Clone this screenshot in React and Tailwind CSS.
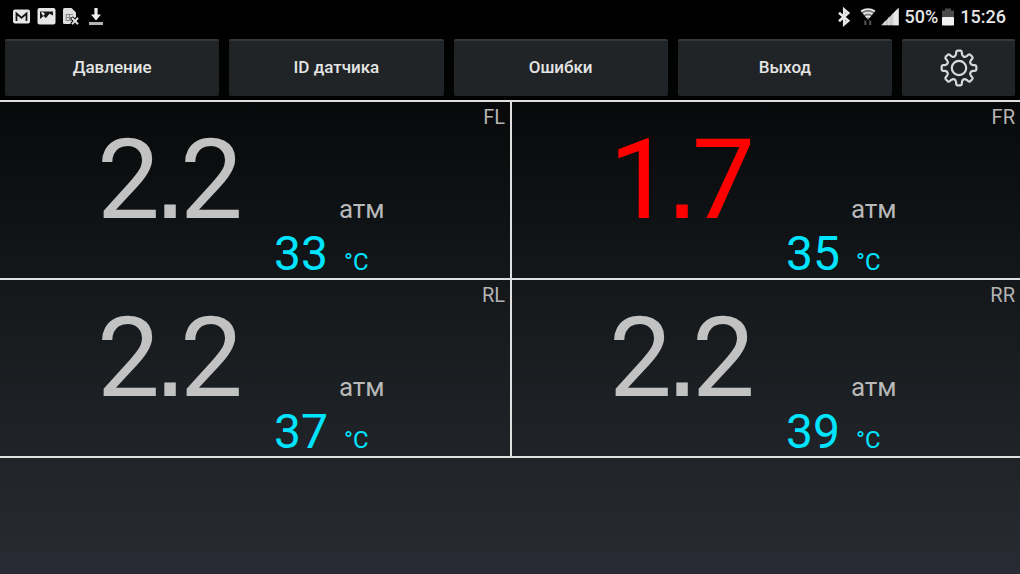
import React from "react";

const tabs = ["Давление", "ID датчика", "Ошибки", "Выход"];

const wheels = [
  { id: "FL", pressure: "2.2", temp: 33 },
  { id: "FR", pressure: "1.7", temp: 35, alert: true },
  { id: "RL", pressure: "2.2", temp: 37 },
  { id: "RR", pressure: "2.2", temp: 39 },
];

function gearPath() {
  const p = (deg, r) => {
    const t = (deg * Math.PI) / 180;
    return `${(Math.sin(t) * r).toFixed(2)} ${(-Math.cos(t) * r).toFixed(2)}`;
  };
  let d = "";
  for (let a = 0; a < 360; a += 45) {
    d += `${a ? "L" : "M"}${p(a - 12, 14.2)} L${p(a - 10, 16.2)} Q${p(a - 9, 17.4)} ${p(a - 5, 17.4)} `;
    d += `L${p(a + 5, 17.4)} Q${p(a + 9, 17.4)} ${p(a + 10, 16.2)} L${p(a + 12, 14.2)} `;
    d += `C${p(a + 17, 11.8)} ${p(a + 28, 11.8)} ${p(a + 33, 14.2)} `;
  }
  return d + "Z";
}

function GearIcon() {
  return (
    <svg viewBox="-20 -20 40 40" className="size-10" fill="none" stroke="#d8d8d8" strokeWidth="2.2" strokeLinejoin="round" aria-hidden="true">
      <path d={gearPath()} />
      <circle r="7.2" />
    </svg>
  );
}

function StatusBar() {
  return (
    <header className="flex h-[34px] items-center justify-between bg-black pr-3.5 pl-3 text-[#e6e6e6]">
      <div className="flex items-center gap-1.5">
        <svg viewBox="0 0 19 18" className="h-[18px] w-[19px]" aria-hidden="true">
          <rect x="1" y="1.5" width="17" height="14" rx="2" fill="#e6e6e6" />
          <path d="M4.5 13V5.5L9.5 9.8L14.5 5.5V13" fill="none" stroke="#151515" strokeWidth="1.8" />
        </svg>
        <svg viewBox="0 0 19 18" className="h-[18px] w-[19px]" aria-hidden="true">
          <rect x="0.5" y="0" width="18" height="16.5" rx="2" fill="#e6e6e6" />
          <path d="M3 3.5H16V7.5L12.5 5.8L9 10L6.5 8L3 11Z" fill="#151515" />
          <path d="M4 4.5L6 4L8 6L6 8Z" fill="#e6e6e6" />
        </svg>
        <svg viewBox="0 0 18 18" className="h-[18px] w-[18px]" aria-hidden="true">
          <path d="M2.5 0H9.5L14 4.5V10L9 16H2.5Q1 16 1 14.5V1.5Q1 0 2.5 0Z" fill="#dedede" />
          <path d="M4 6.5H11M4 9.5H10M4 12.5H9M4.2 6V13M7.5 6V13" fill="none" stroke="#888" strokeWidth="1.1" />
          <path d="M9.5 9.5L16 16.5M16 9.5L9.5 16.5" stroke="#111" strokeWidth="4" />
          <path d="M10 10L16 16.2M16 10L10 16.2" stroke="#e6e6e6" strokeWidth="1.8" />
        </svg>
        <svg viewBox="0 0 16 18" className="ml-0.5 h-[18px] w-4" aria-hidden="true">
          <path d="M6.4 0H9.6V6.5H13L8 12.5L3 6.5H6.4Z" fill="#f2f2f2" />
          <rect x="1" y="14" width="14" height="3" fill="#b5b5b5" />
        </svg>
      </div>
      <div className="flex items-center text-[18px] leading-none font-medium">
        <svg viewBox="0 0 14 20" className="mr-2 h-5 w-3.5" aria-hidden="true">
          <path d="M2 5.8L11.2 13.8L7.2 17.2V2.6L11.2 6L2 14.2" fill="none" stroke="#e6e6e6" strokeWidth="2.6" />
        </svg>
        <svg viewBox="0 0 18 20" className="mr-1 h-5 w-[18px]" aria-hidden="true">
          <path d="M2 4.2Q9 -0.4 16 4.2L9 13Z" fill="#808080" />
          <path d="M2 4.2Q9 -0.2 16 4.2M4.5 7.1Q9 4.4 13.5 7.1M6.7 10Q9 8.6 11.3 10" fill="none" stroke="#ededed" strokeWidth="1.7" />
          <path d="M6.3 13.5V18M11.2 13.5V18" stroke="#555" strokeWidth="2" />
        </svg>
        <svg viewBox="0 0 18 20" className="mr-1.5 h-5 w-[18px]" aria-hidden="true">
          <path d="M0 18.3L17.6 1V18.3Z" fill="#c9c9c9" />
          <path d="M13 5.6L17.6 1V18.3H13Z" fill="#e9e9e9" />
          <path d="M4 14.5V18.3M8 10.5V18.3M12 6.5V18.3" stroke="#e2e2e2" strokeWidth="1.2" />
        </svg>
        <span>50%</span>
        <svg viewBox="0 0 12 20" className="mx-1 h-5 w-3" aria-hidden="true">
          <path d="M3 1.5H9V3.5H12V10H0V3.5H3Z" fill="#4a4a4a" />
          <rect y="10" width="12" height="8.5" rx="1" fill="#f2f2f2" />
        </svg>
        <span className="ml-0.5">15:26</span>
      </div>
    </header>
  );
}

function Wheel({ id, pressure, temp, alert }) {
  const [whole, tenth] = pressure.split(".");
  return (
    <section aria-label={id} className="relative h-[178px] border-b-2 border-[#e0e0e0] pt-[26px] pl-[97px] even:border-l-2">
      <h2 className="absolute top-[3px] right-[5px] text-[20px] leading-6 text-[#b4b4b4]">{id}</h2>
      <div className="flex items-baseline">
        <p className={`flex items-baseline text-[112px] leading-[104px] ${alert ? "text-[#ff0000]" : "text-[#c2c2c2]"}`}>
          <span>{whole}</span>
          <span className="flex w-5 justify-center font-['DejaVu_Sans_Condensed','DejaVu_Sans',sans-serif] text-[72px] leading-none font-bold">.</span>
          <span>{tenth}</span>
        </p>
        <span className="ml-24 text-[26px] text-[#b8b8b8]">атм</span>
      </div>
      <p className="ml-[177px] flex items-baseline text-[48px] leading-[44px] text-[#00e5ff]">
        {temp}
        <span className="ml-4 text-[24px]">°C</span>
      </p>
    </section>
  );
}

const key =
  "h-[57px] rounded-xs border-t-2 border-[#34383b] bg-[#202427] pb-0.5 text-[17px] font-medium text-[#e4e4e4]";

export default function App() {
  return (
    <div className="flex min-h-screen flex-col bg-[linear-gradient(#000_0%,#090b0c_22%,#14181b_50%,#212529_82%,#282b33_100%)] font-['Roboto',sans-serif]">
      <StatusBar />
      <nav className="flex gap-2.5 bg-black/60 px-[5px] pt-[5px] pb-1">
        {tabs.map((t) => (
          <button key={t} type="button" className={`${key} flex-1`}>
            {t}
          </button>
        ))}
        <button type="button" aria-label="Настройки" className={`${key} flex w-[113px] items-center justify-center`}>
          <GearIcon />
        </button>
      </nav>
      <main className="grid grid-cols-2 border-t-2 border-[#e0e0e0]">
        {wheels.map((w) => (
          <Wheel key={w.id} {...w} />
        ))}
      </main>
    </div>
  );
}
